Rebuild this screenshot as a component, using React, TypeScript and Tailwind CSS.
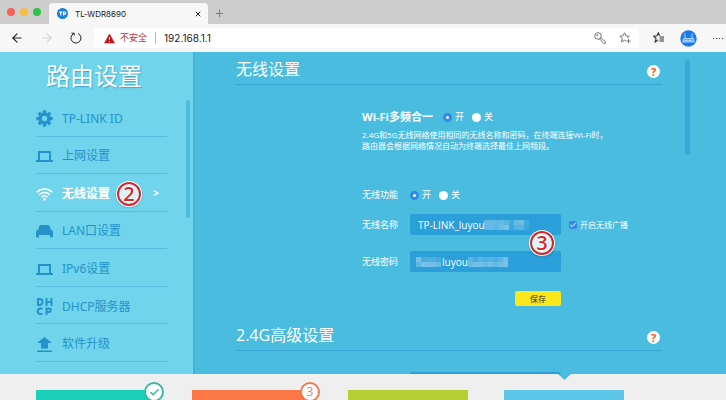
import React, { useState } from 'react';
import { X, Plus, ArrowLeft, ArrowRight, Check } from 'lucide-react';

const NAV_ITEMS = [
  { id: 'id', label: 'TP-LINK ID' },
  { id: 'wan', label: '上网设置' },
  { id: 'wifi', label: '无线设置' },
  { id: 'lan', label: 'LAN口设置' },
  { id: 'ipv6', label: 'IPv6设置' },
  { id: 'dhcp', label: 'DHCP服务器' },
  { id: 'upgrade', label: '软件升级' },
];

const CARDS = [
  { id: 'a', color: 'bg-[#1acfb8]', badge: 'check' },
  { id: 'b', color: 'bg-[#fc7847]', badge: '3' },
  { id: 'c', color: 'bg-[#b6d033]', badge: null },
  { id: 'd', color: 'bg-[#5bc6e8]', badge: null },
];

// opacity of each 5px block, row by row
const NAME_BLOCKS = [
  [0.5, 0.5, 0.45, 0.5, 0.4, 0.2, 0.5, 0.55, 0.2],
  [0.45, 0.5, 0.4, 0.55, 0.65, 0.15, 0.35, 0.4, 0.15],
];
const PASS_BLOCKS_LEFT = [
  [0.6, 0.25, 0.3, 0.3, 0.2],
  [0.45, 0.65, 0.6, 0.6, 0.5],
];
const PASS_BLOCKS_RIGHT = [
  [0.4, 0.25, 0.4, 0.3, 0.35, 0.3, 0.4, 0.6],
  [0.5, 0.6, 0.6, 0.5, 0.6, 0.45, 0.6, 0.65],
];

function Mosaic({ rows, className }: { rows: number[][]; className: string }) {
  return (
    <svg className={`pointer-events-none absolute ${className}`} width={rows[0].length * 5} height="10" aria-hidden="true">
      {rows.map((row, y) =>
        row.map((o, x) => (
          <rect key={`${x}-${y}`} x={x * 5} y={y * 5} width="5" height="5" fill="#a5d6f1" opacity={o} />
        ))
      )}
    </svg>
  );
}

function NavIcon({ id }: { id: string }) {
  if (id === 'id') {
    return (
      <svg width="17" height="17" viewBox="0 0 17 17" fill="currentColor">
        {[0, 45, 90, 135].map(a => (
          <rect key={a} x="6.8" y="0.3" width="3.4" height="16.4" rx="0.6" transform={`rotate(${a} 8.5 8.5)`} />
        ))}
        <circle cx="8.5" cy="8.5" r="6" />
        <circle cx="8.5" cy="8.5" r="2.7" fill="#6fd4ec" />
      </svg>
    );
  }
  if (id === 'wan' || id === 'ipv6') {
    return (
      <svg width="17" height="17" viewBox="0 0 17 17" fill="currentColor">
        <path fillRule="evenodd" d="M2 3h13v9h2v2H0v-2h2zM4 5v7h9V5z" />
      </svg>
    );
  }
  if (id === 'wifi') {
    return (
      <svg width="17" height="17" viewBox="0 0 17 17" fill="none" stroke="currentColor" strokeWidth="1.6">
        <path d="M0.8 7.2a10.8 10.8 0 0 1 15.4 0M3.2 9.7a7.5 7.5 0 0 1 10.6 0M5.7 12.1a4 4 0 0 1 5.6 0" />
        <circle cx="8.5" cy="14.3" r="1.4" fill="currentColor" stroke="none" />
      </svg>
    );
  }
  if (id === 'lan') {
    return (
      <svg width="17" height="17" viewBox="0 0 17 17" fill="currentColor">
        <path d="M5.5 2h6C13 2 14 3 14.2 4.500L14.500 6.500c1.500.3 2.500 1.300 2.500 2.500V13a1.500 1.500 0 0 1-1.500 1.500H14V12H3v2.500H1.500A1.500 1.500 0 0 1 0 13V9c0-1.200 1-2.200 2.500-2.500L2.800 4.500C3 3 4 2 5.500 2z" />
      </svg>
    );
  }
  if (id === 'dhcp') {
    return (
      <svg width="17" height="17" viewBox="0 0 17 17" fill="none" stroke="currentColor" strokeWidth="2">
        <path d="M2 1v6h1.500a3 3 0 0 0 0-6zM10.500 0v8M15.500 0v8M10.500 4h5" />
        <path d="M6.500 10.500H4.500a2.500 2.500 0 0 0 0 5.500h2M10.500 17v-6.500h2.500a1.800 1.800 0 0 1 0 3.600h-2.500" />
      </svg>
    );
  }
  return (
    <svg width="17" height="17" viewBox="0 0 17 17" fill="currentColor">
      <path d="M8.500 1l7.500 6h-4v5.500H5V7H1zM1 14.500h15V16H1z" />
    </svg>
  );
}

function Step({ n, className }: { n: number; className: string }) {
  return (
    <span
      className={`absolute z-10 flex size-[26px] items-center justify-center rounded-full bg-white shadow ${className}`}
    >
      <span className="flex size-6 items-center justify-center rounded-full border-2 border-[#d0282c] bg-[#dcf1f8] font-['Open_Sans',sans-serif] text-xl font-semibold leading-none text-[#d0282c] [text-shadow:1px_0_1px_#fff,-1px_0_1px_#fff,0_1px_1px_#fff,0_-1px_1px_#fff]">
        {n}
      </span>
    </span>
  );
}

function Radios({ name }: { name: string }) {
  const cls =
    'size-[9px] appearance-none rounded-full bg-white checked:border-[3px] checked:border-[#2f8be6]';
  return (
    <span className="flex items-center gap-2 text-[9px] leading-3">
      <label className="flex items-center gap-[3px]">
        <input type="radio" name={name} defaultChecked className={cls} />开
      </label>
      <label className="flex items-center gap-[3px]">
        <input type="radio" name={name} className={cls} />关
      </label>
    </span>
  );
}

function SectionHeader({ title }: { title: string }) {
  return (
    <div className="flex h-[33px] items-center justify-between border-b border-[#36a5d6] pr-0.5 pt-0.5">
      <h2 className="text-base leading-6">{title}</h2>
      <button
        aria-label="帮助"
        className="mt-1 flex size-[13px] items-center justify-center rounded-full bg-white text-[11px] font-bold leading-none text-[#e8582a]"
      >
        ?
      </button>
    </div>
  );
}

function BrowserChrome() {
  return (
    <header className="shrink-0 font-[Inter,'Noto_Sans_CJK_SC',sans-serif] text-[#222]">
      <div className="flex h-6 items-end bg-[#cdcdcd]">
        <div className="flex h-6 w-[49px] items-center gap-[5px] pl-[7px]">
          <span className="size-2 rounded-full bg-[#f4605a]" />
          <span className="size-2 rounded-full bg-[#f8bd3c]" />
          <span className="size-2 rounded-full bg-[#2fc344]" />
        </div>
        <div className="flex h-[21px] w-[159px] items-center rounded-t bg-[#f7f7f7] pl-2 pr-1.5">
          <svg width="11" height="11" viewBox="0 0 11 11">
            <circle cx="5.5" cy="5.5" r="5.500" fill="#1b7fdc" />
            <path d="M2 4h3.500M3.700 4v3.500M6.500 7.500V4h1.200a1 1 0 0 1 0 2.200H6.500" stroke="#fff" strokeWidth="1.200" fill="none" />
          </svg>
          <span className="ml-[7px] flex-1 text-[8px] leading-3">TL-WDR8690</span>
          <button aria-label="关闭"><X size={8} strokeWidth={3} /></button>
        </div>
        <button aria-label="新标签页" className="ml-1.5 flex h-[21px] items-center text-[#777]"><Plus size={11} strokeWidth={2} /></button>
      </div>
      <div className="flex h-7 items-center bg-[#f7f7f7] pl-2.5">
        <button aria-label="后退"><ArrowLeft size={14} strokeWidth={2} /></button>
        <button aria-label="前进" className="ml-4 text-[#d5d5d5]"><ArrowRight size={14} strokeWidth={2} /></button>
        <button aria-label="刷新" className="ml-4">
          <svg width="12" height="12" viewBox="0 0 12 12" fill="none" stroke="currentColor" strokeWidth="1">
            <path d="M8 1.500A5 5 0 1 1 3.500 1.700M1.500 1.200h2.700v2.500" />
          </svg>
        </button>
        <div className="ml-3 flex h-5 flex-1 items-center rounded-sm bg-white pl-2.5 pr-2 text-[9px] leading-3">
          <svg width="11" height="11" viewBox="0 0 11 11">
            <path d="M5.500 1l5 9H.5z" fill="#c8141c" stroke="#c8141c" strokeLinejoin="round" strokeWidth="0.600" />
            <path d="M5.500 4v3M5.500 8v1" stroke="#fff" strokeWidth="0.900" />
          </svg>
          <span className="ml-[5px] text-[#c8323a]">不安全</span>
          <span className="mx-2 h-3 w-px bg-[#bbb]" />
          <input aria-label="地址" defaultValue="192.168.1.1" className="min-w-0 flex-1 text-[10px] outline-none" />
          <svg width="12" height="12" viewBox="0 0 12 12" fill="none" stroke="#666" strokeWidth="0.900">
            <circle cx="4" cy="4" r="3.300" />
            <path d="M6.700 5.500l4.600 4.200v1.600H9.600L5.500 6.800" />
            <circle cx="3.200" cy="3.200" r="0.500" />
          </svg>
          <svg className="ml-[13px]" width="12" height="12" viewBox="0 0 12 12" fill="none" stroke="#666" strokeWidth="0.900">
            <path d="M7 9L5.500 8.200 2.500 10l.7-3.500L.8 4.200l3.200-.4L5.500.8 7 3.800l3.200.4-2 2M9.500 7v4M7.500 9h4" />
          </svg>
        </div>
        <div className="ml-3.5 flex w-[73px] shrink-0 items-center">
          <svg width="12" height="12" viewBox="0 0 12 12" fill="none" stroke="#333" strokeWidth="1.100">
            <path d="M5 8L2.200 10l.8-3.500L.8 4.200 4 3.800 5.300.8l1.300 3M6.500 5H11M6.500 7H11M6.500 9H11" />
          </svg>
          <svg className="ml-[15px]" width="17" height="17" viewBox="0 0 17 17">
            <circle cx="8.5" cy="8.5" r="8.200" fill="#1c7ae6" />
            <path d="M5 3.500v5M12 3.500v5M3.500 8.500h10l.8 3.500H2.700z" stroke="#a9d6fb" strokeWidth="1" fill="#5fb0f3" />
            <path d="M4.500 10.500h8" stroke="#e4f3fe" strokeWidth="1" strokeDasharray="1 1" />
          </svg>
          <span className="ml-4 flex gap-0.5">
            <i className="size-px bg-[#333]" />
            <i className="size-px bg-[#333]" />
            <i className="size-px bg-[#333]" />
            <i className="size-px bg-[#333]" />
          </span>
        </div>
      </div>
    </header>
  );
}

function Sidebar() {
  const [active, setActive] = useState('wifi');
  return (
    <aside className="relative w-[193px] shrink-0 bg-[#6fd4ec] pl-9 pr-[26px]">
      <h1 className="flex h-[47px] items-center pl-2.5 text-2xl [text-shadow:1px_1px_1px_#3fa9cb]">路由设置</h1>
      <nav className="grid h-[263px] grid-rows-7 font-['Noto_Sans','Noto_Sans_CJK_SC',sans-serif]">
        {NAV_ITEMS.map(item => (
          <a
            key={item.id}
            href={`#${item.id}`}
            onClick={() => setActive(item.id)}
            className={`relative flex items-center gap-[9px] border-b border-[#58bddd] pt-[3px] text-xs ${
              active === item.id ? 'font-medium text-white [text-shadow:0_0_1px_#fff]' : 'text-[#2593ca]'
            }`}
          >
            <NavIcon id={item.id} />
            <span>{item.label}</span>
            {active === item.id && <span className="ml-auto pr-2 text-[10px]">&gt;</span>}
            {item.id === 'wifi' && <Step n={2} className="left-20" />}
          </a>
        ))}
      </nav>
      <div className="absolute right-[3px] top-12 h-[118px] w-1 rounded-full bg-[#4dbcdf]" />
    </aside>
  );
}

function WirelessForm() {
  const field = 'h-[21px] w-[151px] rounded-xs bg-[#2a9fd9] text-[10px] text-white outline-none';
  return (
    <form className="pl-[126px] pt-[25px] text-[9px]" onSubmit={e => e.preventDefault()}>
      <div className="flex h-3.5 items-center gap-2.5">
        <span className="text-[11px] font-bold leading-[14px]">Wi-Fi多频合一</span>
        <Radios name="merge" />
      </div>
      <p className="mt-[5px] text-[8px] leading-[11px]">
        2.4G和5G无线网络使用相同的无线名称和密码，在终端连接Wi-Fi时，
        <br />
        路由器会根据网络情况自动为终端选择最佳上网频段。
      </p>
      <div className="mt-[37px] flex h-3.5 items-center">
        <span className="w-12">无线功能</span>
        <Radios name="enable" />
      </div>
      <div className="relative mt-3 flex h-[21px] items-center">
        <label htmlFor="ssid" className="w-12">无线名称</label>
        <input id="ssid" defaultValue="TP-LINK_luyou" className={`${field} pl-2`} />
        <Mosaic rows={NAME_BLOCKS} className="left-[122px] top-1.5" />
        <label className="ml-2 flex items-center gap-[3px] text-[8px]">
          <span className="relative flex size-2">
            <input type="checkbox" defaultChecked className="size-2 appearance-none rounded-xs bg-white checked:bg-[#2f8be6]" />
            <Check size={8} strokeWidth={3} className="pointer-events-none absolute" />
          </span>
          开启无线广播
        </label>
        <Step n={3} className="left-[167px] top-4" />
      </div>
      <div className="relative mt-4 flex h-[21px] items-center">
        <label htmlFor="pwd" className="w-12">无线密码</label>
        <input id="pwd" defaultValue="luyou" className={`${field} pl-8`} />
        <Mosaic rows={PASS_BLOCKS_LEFT} className="left-[54px] top-1.5" />
        <Mosaic rows={PASS_BLOCKS_RIGHT} className="left-[106px] top-1.5" />
      </div>
      <button className="ml-[153px] mt-[19px] flex h-[15px] w-[46px] items-center justify-center rounded-xs bg-[#fbe71c] text-[8px] text-[#333]">
        保存
      </button>
    </form>
  );
}

export default function App() {
  return (
    <div className="flex h-screen flex-col overflow-hidden bg-[#efefef] font-['Open_Sans','Noto_Sans_CJK_SC',sans-serif]">
      <BrowserChrome />
      <div className="flex min-h-0 flex-1 overflow-hidden bg-[#49bce0] text-white">
        <Sidebar />
        <main className="min-w-0 flex-1 border-l-2 border-[#44b2d8] pl-[41px]">
          <SectionHeader title="无线设置" />
          <WirelessForm />
          <div className="mt-3">
            <SectionHeader title="2.4G高级设置" />
            <div className="pl-[174px] pt-[21px]">
              <input aria-label="2.4G无线名称" className="block h-[21px] w-[151px] rounded-xs bg-[#2a9fd9]" />
            </div>
          </div>
        </main>
        <div className="ml-[23px] mr-9 mt-2 h-[95px] w-[5px] shrink-0 rounded-full bg-[#38a8d9]" />
      </div>
      <footer className="relative flex h-[26px] shrink-0 items-end gap-9 pl-9">
        <svg className="absolute left-[558px] top-0" width="13" height="6" viewBox="0 0 13 6">
          <path d="M0 0h13L6.500 6z" fill="#49bce0" />
        </svg>
        {CARDS.map(card => (
          <div key={card.id} className={`relative h-2.5 w-[120px] ${card.color}`}>
            {card.badge === 'check' && (
              <span className="absolute -right-2 -top-2 flex size-5 items-center justify-center rounded-full border-2 border-[#33bba4] bg-white text-[#33bba4]">
                <Check size={11} strokeWidth={3.5} />
              </span>
            )}
            {card.badge === '3' && (
              <span className="absolute -right-2 -top-2 flex size-5 items-center justify-center rounded-full border-2 border-[#ec7a52] bg-white text-xs leading-none text-[#ec7a52]">
                3
              </span>
            )}
          </div>
        ))}
      </footer>
    </div>
  );
}
